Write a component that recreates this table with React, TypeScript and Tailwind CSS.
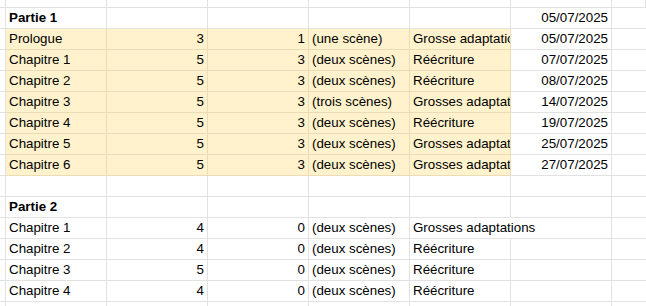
import React from 'react';

type Row = {
  name: string;
  count?: string;
  scenes?: string;
  label?: string;
  kind?: string;
  date?: string;
  bold?: boolean;
  hl?: boolean;
  spill?: boolean;
};

const rows: Row[] = [
  { name: 'Partie 1', bold: true, date: '05/07/2025' },
  { name: 'Prologue', count: '3', scenes: '1', label: '(une scène)', kind: 'Grosse adaptation', date: '05/07/2025', hl: true },
  { name: 'Chapitre 1', count: '5', scenes: '3', label: '(deux scènes)', kind: 'Réécriture', date: '07/07/2025', hl: true },
  { name: 'Chapitre 2', count: '5', scenes: '3', label: '(deux scènes)', kind: 'Réécriture', date: '08/07/2025', hl: true },
  { name: 'Chapitre 3', count: '5', scenes: '3', label: '(trois scènes)', kind: 'Grosses adaptations', date: '14/07/2025', hl: true },
  { name: 'Chapitre 4', count: '5', scenes: '3', label: '(deux scènes)', kind: 'Réécriture', date: '19/07/2025', hl: true },
  { name: 'Chapitre 5', count: '5', scenes: '3', label: '(deux scènes)', kind: 'Grosses adaptations', date: '25/07/2025', hl: true },
  { name: 'Chapitre 6', count: '5', scenes: '3', label: '(deux scènes)', kind: 'Grosses adaptations', date: '27/07/2025', hl: true },
  { name: '' },
  { name: 'Partie 2', bold: true },
  { name: 'Chapitre 1', count: '4', scenes: '0', label: '(deux scènes)', kind: 'Grosses adaptations', spill: true },
  { name: 'Chapitre 2', count: '4', scenes: '0', label: '(deux scènes)', kind: 'Réécriture' },
  { name: 'Chapitre 3', count: '5', scenes: '0', label: '(deux scènes)', kind: 'Réécriture' },
  { name: 'Chapitre 4', count: '4', scenes: '0', label: '(deux scènes)', kind: 'Réécriture' },
  { name: '' },
];

const grid = 'grid grid-cols-[6px_101px_101px_101px_101px_101px_101px_1fr]';
const base = 'h-[21px] border-r border-b px-[3px] leading-[20px] whitespace-nowrap overflow-hidden';

const Cell = ({ children = null, hl = false, right = false, bold = false, span = false }: {
  children?: React.ReactNode; hl?: boolean; right?: boolean; bold?: boolean; span?: boolean;
}) => (
  <div
    className={`${base} ${hl ? 'bg-[#fff2cc] border-[#ebdcb5]' : 'bg-white border-[#e2e2e2]'} ${right ? 'text-right' : ''} ${bold ? 'font-bold' : ''} ${span ? 'col-span-2' : ''}`}
  >
    {children}
  </div>
);

export default function App() {
  return (
    <div className="w-[646px] h-[306px] overflow-hidden bg-white text-[13.33px] text-black" style={{ fontFamily: '"Liberation Sans", Arial, sans-serif' }}>
      <div className={grid}>
        {Array.from({ length: 8 }).map((_, i) => (
          <div key={i} className="h-[8px] border-r border-b border-[#e2e2e2]" />
        ))}
      </div>
      {rows.map((r, i) => (
        <div key={i} className={grid}>
          <div className="h-[21px] border-r border-b border-[#e2e2e2]" />
          <Cell hl={r.hl} bold={r.bold}>{r.name}</Cell>
          <Cell hl={r.hl} right>{r.count}</Cell>
          <Cell hl={r.hl} right>{r.scenes}</Cell>
          <Cell hl={r.hl}>{r.label}</Cell>
          {r.spill ? (
            <Cell span>{r.kind}</Cell>
          ) : (
            <>
              <Cell hl={r.hl}>{r.kind}</Cell>
              <Cell right>{r.date}</Cell>
            </>
          )}
          <div className="h-[21px] border-b border-[#e2e2e2]" />
        </div>
      ))}
    </div>
  );
}
